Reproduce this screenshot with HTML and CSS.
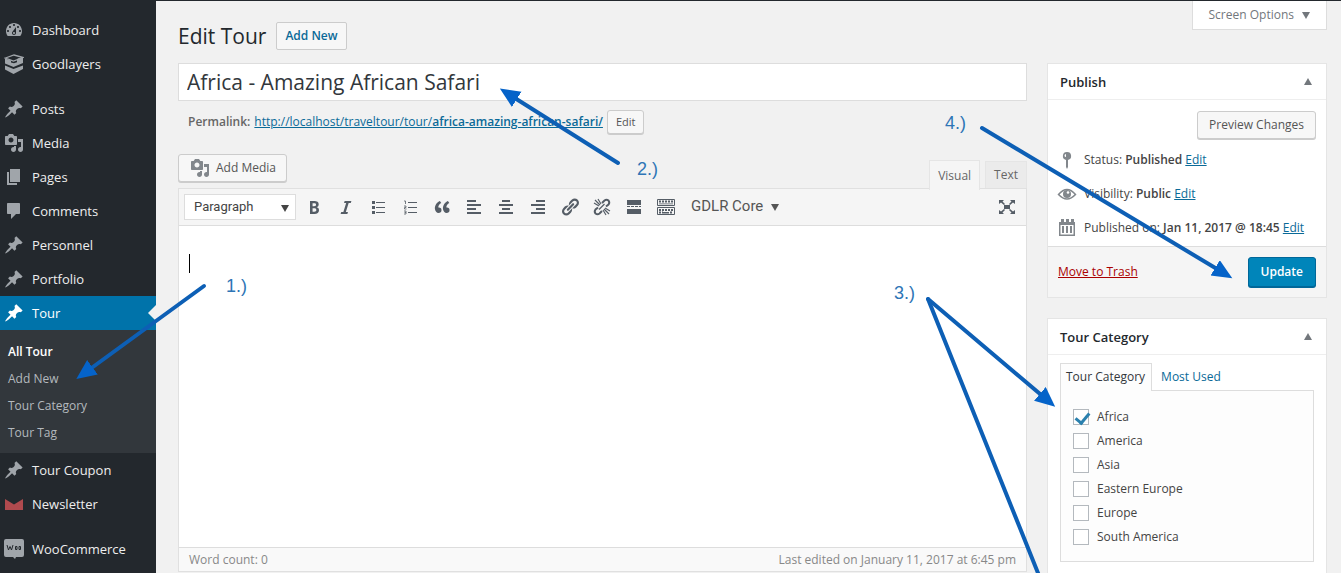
FILE: index.html
```html
<!DOCTYPE html>
<html lang="en">
<head>
<meta charset="utf-8">
<title>Edit Tour</title>
<link rel="stylesheet" href="styles.css">
</head>
<body>
<svg class="defs" aria-hidden="true">
  <symbol id="pin" viewBox="0 0 20 20"><path d="M10.44 3.02l1.82-1.82 6.36 6.35-1.83 1.82c-1.05-.68-2.48-.57-3.41.36l-.75.75c-.92.93-1.04 2.35-.35 3.41l-1.83 1.82-2.41-2.41-2.8 2.79c-.42.42-3.38 2.71-3.8 2.29s1.86-3.39 2.28-3.81l2.79-2.79L4.1 9.36l1.83-1.82c1.05.69 2.48.57 3.4-.36l.75-.75c.93-.92 1.05-2.35.36-3.41z"/></symbol>
  <symbol id="media" viewBox="0 0 20 20"><path fill-rule="evenodd" d="M13 11V4c0-.55-.45-1-1-1h-1.670L9 1H5L3.670 3H2c-.55 0-1 .45-1 1v7c0 .55.45 1 1 1h10c.55 0 1-.45 1-1zM7 4.500c1.380 0 2.500 1.120 2.500 2.500S8.380 9.500 7 9.500 4.500 8.380 4.500 7 5.620 4.500 7 4.500zM14 6h5v10.500c0 1.380-1.120 2.500-2.500 2.500S14 17.880 14 16.500s1.120-2.500 2.500-2.500c.17 0 .34.02.5.05V9h-3V6zm-4 8.050V13h2v3.500c0 1.380-1.120 2.500-2.500 2.500S7 17.880 7 16.500 8.120 14 9.500 14c.17 0 .34.02.5.05z"/></symbol>
</svg>
<div class="app">
  <nav class="menu" aria-label="Main menu">
    <a class="menu-item" href="#"><svg class="icon" viewBox="0 0 20 20"><path fill-rule="evenodd" d="M3.760 16h12.480c1.100-1.370 1.760-3.110 1.760-5 0-4.420-3.580-8-8-8s-8 3.580-8 8c0 1.890.66 3.630 1.760 5zM10 4c.55 0 1 .45 1 1s-.45 1-1 1-1-.45-1-1 .45-1 1-1zM6 6c.55 0 1 .45 1 1s-.45 1-1 1-1-.45-1-1 .45-1 1-1zm8 0c.55 0 1 .45 1 1s-.45 1-1 1-1-.45-1-1 .45-1 1-1zm-5.370 5.550L12 7v6c0 1.100-.9 2-2 2s-2-.9-2-2c0-.57.24-1.080.63-1.450zM4 10c.55 0 1 .45 1 1s-.45 1-1 1-1-.45-1-1 .45-1 1-1zm12 0c.55 0 1 .45 1 1s-.45 1-1 1-1-.45-1-1 .45-1 1-1zm-5 3c0-.55-.45-1-1-1s-1 .45-1 1 .45 1 1 1 1-.45 1-1z"/></svg>Dashboard</a>
    <a class="menu-item" href="#"><svg class="icon" viewBox="0 0 20 20"><path fill="none" stroke="currentColor" stroke-width="1.300" d="M1.500 4L10 1l9 2.500L9.500 7z"/><path d="M1 4.500l6 2v2l3 .8 3-1V5l2-1 4-.5V9l-9.500 4L1 9.500z"/><path d="M1 11.500l8.500 3.500L19 11.500V15l-9.500 5L1 15.500z"/></svg>Goodlayers</a>
    <div class="menu-gap"></div>
    <a class="menu-item" href="#"><svg class="icon"><use href="#pin"/></svg>Posts</a>
    <a class="menu-item" href="#"><svg class="icon"><use href="#media"/></svg>Media</a>
    <a class="menu-item" href="#"><svg class="icon" viewBox="0 0 20 20"><path d="M6 15V2h10v13H6zm-1 1h8v2H3V5h2v11z"/></svg>Pages</a>
    <a class="menu-item" href="#"><svg class="icon" viewBox="0 0 20 20"><path d="M4 2h11c.6 0 1 .4 1 1v9c0 .6-.4 1-1 1h-3l-5 5v-5H4c-.6 0-1-.4-1-1V3c0-.6.4-1 1-1z"/></svg>Comments</a>
    <a class="menu-item" href="#"><svg class="icon"><use href="#pin"/></svg>Personnel</a>
    <a class="menu-item" href="#"><svg class="icon"><use href="#pin"/></svg>Portfolio</a>
    <a class="menu-item current" href="#"><svg class="icon"><use href="#pin"/></svg>Tour</a>
    <div class="submenu">
      <a class="active" href="#">All Tour</a>
      <a href="#">Add New</a>
      <a href="#">Tour Category</a>
      <a href="#">Tour Tag</a>
    </div>
    <a class="menu-item" href="#"><svg class="icon"><use href="#pin"/></svg>Tour Coupon</a>
    <a class="menu-item" href="#"><svg class="icon" viewBox="0 0 20 20"><path fill="#b04a4e" d="M1 5l9 5.500L19 5v11H1z"/></svg>Newsletter</a>
    <div class="menu-gap"></div>
    <a class="menu-item" href="#"><svg class="icon" viewBox="0 0 20 20"><path d="M2 0h16q2 0 2 2v14q0 2-2 2h-6l-1 2-2-2H2q-2 0-2-2V2q0-2 2-2z"/><path d="M3 6l1.500 5L6 7.500 7.500 11 9 6M11.500 7.500v3h1.500v-3zM15 7.500v3h1.500v-3z" fill="none" stroke="#23282d"/></svg>WooCommerce</a>
  </nav>

  <main class="main">
    <header class="page-head">
      <div class="heading"><h1>Edit Tour</h1><a class="add-new" href="#">Add New</a></div>
      <button class="screen-options" type="button">Screen Options <svg class="tri" viewBox="0 0 8 7"><path d="M0 0h8L4 7z"/></svg></button>
    </header>
    <div class="columns">
      <section class="editor-col">
        <input class="title" type="text" aria-label="Tour title" value="Africa - Amazing African Safari">
        <div class="permalink"><strong>Permalink:</strong><a href="#">http://localhost/traveltour/tour/<b>africa-amazing-african-safari/</b></a><button class="btn small" type="button">Edit</button></div>
        <div class="editor-tools">
          <button class="btn add-media" type="button"><svg class="icon"><use href="#media"/></svg>Add Media</button>
          <div class="mode-tabs"><button class="on" type="button">Visual</button><button type="button">Text</button></div>
        </div>
        <div class="editor">
          <div class="toolbar">
            <div class="format"><select aria-label="Format"><option>Paragraph</option></select><svg class="tri" viewBox="0 0 8 7"><path d="M0 0h8L4 7z"/></svg></div>
            <button type="button" aria-label="Bold"><svg viewBox="0 0 20 20"><path fill-rule="evenodd" d="M6 4v13h4.540c1.370 0 2.460-.33 3.260-1 .8-.66 1.200-1.580 1.200-2.770 0-.84-.17-1.510-.51-2.010s-.9-.85-1.670-1.030v-.09c.57-.1 1.020-.4 1.360-.9s.51-1.130.51-1.910c0-1.140-.39-1.980-1.170-2.500C12.750 4.260 11.500 4 9.780 4H6zm2.570 5.150V6.260h1.360c.73 0 1.270.11 1.610.32.34.22.51.58.51 1.070 0 .54-.16.92-.47 1.150s-.82.35-1.510.35h-1.500zm0 2.190h1.600c1.440 0 2.160.53 2.160 1.610 0 .6-.17 1.050-.51 1.340s-.86.43-1.570.43H8.570v-3.380z"/></svg></button>
            <button type="button" aria-label="Italic"><svg viewBox="0 0 20 20"><path d="M14.780 6h-2.130l-2.800 9h2.120l-.62 2H4.600l.62-2h2.140l2.800-9H8.030l.62-2h6.750z"/></svg></button>
            <button type="button" aria-label="Bulleted list"><svg viewBox="0 0 20 20"><path d="M4 4h3v3H4zM4 9h3v3H4zM4 14h3v3H4zM8 5h9v1H8zM8 10h9v1H8zM8 15h9v1H8z"/></svg></button>
            <button type="button" aria-label="Numbered list"><svg viewBox="0 0 20 20"><path d="M8 5h9v1H8zM8 10h9v1H8zM8 15h9v1H8z"/><path d="M4 4h1.500v3M4 9h2v1.500H4.500V12H6.500M4 14h2v3H4M4.500 15.500H6" fill="none" stroke="#555d66" stroke-width=".8"/></svg></button>
            <button type="button" aria-label="Quote"><svg viewBox="0 0 20 20"><path d="M9.490 13.220c0-.74-.2-1.380-.61-1.900-.62-.78-1.830-.88-2.530-.72-.29-1.650 1.110-3.750 2.920-4.650L7.880 4c-2.730 1.300-5.420 4.280-4.960 8.050C3.210 14.430 4.590 16 6.540 16c.85 0 1.560-.25 2.120-.75s.83-1.180.83-2.030zm8.050 0c0-.74-.2-1.380-.61-1.900-.63-.78-1.830-.88-2.530-.72-.29-1.650 1.110-3.750 2.920-4.650L15.930 4c-2.730 1.300-5.410 4.280-4.950 8.050.29 2.380 1.660 3.950 3.610 3.950.85 0 1.560-.25 2.120-.75s.83-1.180.83-2.030z"/></svg></button>
            <button type="button" aria-label="Align left"><svg viewBox="0 0 20 20"><path d="M3 3h9v2H3zM3 7h14v2H3zM3 11h9v2H3zM3 15h14v2H3z"/></svg></button>
            <button type="button" aria-label="Align center"><svg viewBox="0 0 20 20"><path d="M6 3h8v2H6zM3 7h14v2H3zM6 11h8v2H6zM3 15h14v2H3z"/></svg></button>
            <button type="button" aria-label="Align right"><svg viewBox="0 0 20 20"><path d="M8 3h9v2H8zM3 7h14v2H3zM8 11h9v2H8zM3 15h14v2H3z"/></svg></button>
            <button type="button" aria-label="Link"><svg viewBox="0 0 20 20"><path d="M17.740 2.760c1.680 1.690 1.680 4.410 0 6.100l-1.530 1.520c-1.120 1.120-2.700 1.470-4.140 1.090l2.620-2.610.76-.77.76-.76c.84-.84.84-2.200 0-3.040-.84-.85-2.200-.85-3.040 0l-.77.76-3.380 3.380c-.37-1.440-.02-3.020 1.100-4.140l1.520-1.530c1.690-1.680 4.420-1.680 6.100 0zM8.590 13.430l5.340-5.340c.42-.42.42-1.100 0-1.520-.44-.43-1.130-.39-1.530 0l-5.330 5.340c-.42.42-.42 1.100 0 1.520.44.43 1.130.39 1.520 0zm-.76 2.290l4.140-4.150c.38 1.440.03 3.020-1.090 4.140l-1.520 1.530c-1.690 1.680-4.410 1.680-6.100 0-1.680-1.680-1.680-4.420 0-6.100l1.530-1.520c1.120-1.120 2.700-1.470 4.140-1.100l-4.140 4.150c-.85.84-.85 2.200 0 3.050.84.84 2.200.84 3.040 0z"/></svg></button>
            <button type="button" aria-label="Remove link"><svg viewBox="0 0 20 20"><path fill="none" stroke="#555d66" stroke-width="2" d="M10 6l2.500-2.500q2-1.500 4 0 1.500 2 0 4L14 9.500M10 14l-2.500 2.500q-2 1.500-4 0-1.500-2 0-4L6 10.500"/><path fill="none" stroke="#555d66" stroke-width="1.200" d="M8 8L3 3M9 7L6 2M7 9L2 6M12 12l5 5M11 13l3 5M13 11l5 3M7 12.500l5.500-5.500"/></svg></button>
            <button type="button" aria-label="Read more"><svg viewBox="0 0 20 20"><path d="M3 3h14v5H3zM3 9h3v1H3zM7 9h3v1H7zM11 9h3v1h-3zM15 9h2v1h-2zM3 12h14v5H3z"/></svg></button>
            <button type="button" aria-label="Toolbar toggle"><svg viewBox="0 0 20 20"><path fill="none" stroke="#555d66" d="M1.500 2.500h17v6h-17zM1.500 10.500h17v7h-17z"/><path fill="none" stroke="#555d66" stroke-width="2" stroke-dasharray="2 1" d="M3 4.500h14M3 13h14M3 15.500h4M14 15.500h3"/><path d="M7 15h6v1.500H7zM3 6.500h14v.7H3z"/></svg></button>
            <button class="core" type="button">GDLR Core <svg class="tri" viewBox="0 0 8 7"><path d="M0 0h8L4 7z"/></svg></button>
            <button class="full" type="button" aria-label="Fullscreen"><svg viewBox="0 0 20 20"><path d="M7 8h6v4H7zM2 3h5L5.500 4.500 8 7 7 8 4 5.500 2 7zM18 3h-5l1.500 1.500L12 7l1 1 3-2.500L18 7zM2 17h5l-1.500-1.500L8 13l-1-1-3 2.500L2 13zM18 17h-5l1.500-1.500L12 13l1-1 3 2.500 2-1.500z"/></svg></button>
          </div>
          <div class="canvas" role="textbox" aria-label="Content"><span class="caret"></span></div>
          <div class="status"><span>Word count: 0</span><span>Last edited on January 11, 2017 at 6:45 pm</span></div>
        </div>
      </section>

      <aside class="side-col">
        <section class="box">
          <h2>Publish<svg class="tri" viewBox="0 0 8 7"><path d="M0 7h8L4 0z"/></svg></h2>
          <div class="publish">
            <button class="btn preview" type="button">Preview Changes</button>
            <div class="info"><svg class="icon" viewBox="0 0 20 20"><path fill-rule="evenodd" d="M10 2a4 4 0 0 1 1 7.900V17l-1 2-1-2V9.900A4 4 0 0 1 10 2zM9 4a1.500 1.500 0 0 0 0 3z"/></svg><span>Status: <b>Published</b> <a href="#">Edit</a></span></div>
            <div class="info"><svg class="icon" viewBox="0 0 20 20"><path fill="none" stroke="#82878c" stroke-width="1.500" d="M1.500 10.500q8.500-10 17 0-8.500 9-17 0z"/><circle cx="10" cy="10" r="4"/><circle cx="11" cy="8.500" r="1.300" fill="#fff"/></svg><span>Visibility: <b>Public</b> <a href="#">Edit</a></span></div>
            <div class="info"><svg class="icon" viewBox="0 0 20 20"><path fill-rule="evenodd" d="M2 4h2V1h3v3h2V1h3v3h2V1h3v3h1v14H2zM3.500 7v9.500h13V7zM5 8h2v7H5zM9 8h2v7H9zM13 8h2v7h-2z"/></svg><span>Published on: <b>Jan 11, 2017 @ 18:45</b> <a href="#">Edit</a></span></div>
          </div>
          <div class="publish-foot"><a class="trash" href="#">Move to Trash</a><button class="update" type="button">Update</button></div>
        </section>
        <section class="box">
          <h2>Tour Category<svg class="tri" viewBox="0 0 8 7"><path d="M0 7h8L4 0z"/></svg></h2>
          <div class="category">
            <div class="cat-tabs"><a class="on" href="#">Tour Category</a><a href="#">Most Used</a></div>
            <div class="cat-list">
              <label><input type="checkbox" checked>Africa</label>
              <label><input type="checkbox">America</label>
              <label><input type="checkbox">Asia</label>
              <label><input type="checkbox">Eastern Europe</label>
              <label><input type="checkbox">Europe</label>
              <label><input type="checkbox">South America</label>
            </div>
          </div>
        </section>
      </aside>
    </div>
  </main>
  <svg class="notes" width="1341" height="573" viewBox="0 0 1341 573">
    <defs><marker id="head" markerUnits="userSpaceOnUse" markerWidth="22" markerHeight="20" refX="8" refY="9" orient="auto"><path d="M0 0L20 9L0 18z" fill="#0563c9"/></marker></defs>
    <g class="arrows">
      <path d="M204 286L86 372" marker-end="url(#head)"/>
      <path d="M618 163L510 95" marker-end="url(#head)"/>
      <path d="M928 299L1046 399" marker-end="url(#head)"/>
      <path d="M928 299L1042 583"/>
      <path d="M982 128L1222 272" marker-end="url(#head)"/>
    </g>
    <text x="226" y="292">1.)</text>
    <text x="637" y="175">2.)</text>
    <text x="894" y="299">3.)</text>
    <text x="945" y="129">4.)</text>
  </svg>
</div>
</body>
</html>
```

FILE: styles.css
```css
* { box-sizing: border-box; }
body {
  margin: 0;
  background: #f1f1f1;
  color: #444;
  font: 12px/18px "Open Sans", "Noto Sans", sans-serif;
}
button, input, select { font: inherit; color: inherit; margin: 0; }
button { padding: 0; border: 0; background: none; }
a { color: #0a6a98; }
b, strong { font-weight: 600; }
svg { flex: none; fill: currentColor; }
.defs { position: absolute; width: 0; height: 0; }
.icon { width: 20px; height: 20px; color: #82878c; }
.tri { width: 8px; height: 7px; }
.app { position: relative; display: flex; height: 100vh; overflow: hidden; }

.menu { flex: 0 0 156px; padding-top: 13px; background: #23282d; }
.menu-item {
  display: flex;
  align-items: center;
  gap: 8px;
  height: 34px;
  padding-left: 4px;
  color: #eee;
  font-size: 13px;
  text-decoration: none;
}
.menu-item .icon { color: #a0a5aa; }
.menu-gap { height: 11px; }
.menu-item.current { background: #0073aa; color: #fff; }
.menu-item.current .icon { color: #fff; }
.menu-item.current::after {
  content: "";
  margin-left: auto;
  border: 8px solid transparent;
  border-left: 0;
  border-right-color: #f1f1f1;
}
.submenu { padding: 8px 8px 7px; background: #32373c; }
.submenu a { display: block; line-height: 27px; color: #b4b9be; text-decoration: none; }
.submenu .active { color: #fff; font-weight: 600; }

.main { flex: 1; min-width: 0; padding: 0 14px 0 22px; border-top: 1px solid #23282d; }
.page-head { display: flex; justify-content: space-between; align-items: flex-start; height: 62px; }
.heading { display: flex; align-items: center; gap: 10px; padding-top: 20px; }
h1 { margin: 0; font-size: 21px; line-height: 30px; font-weight: 400; color: #23282d; }
.add-new {
  padding: 3px 8px;
  border: 1px solid #ccc;
  border-radius: 2px;
  background: #f7f7f7;
  font-weight: 600;
  line-height: 20px;
  text-decoration: none;
}
.screen-options {
  display: flex;
  align-items: center;
  gap: 8px;
  height: 29px;
  padding: 0 16px;
  border: 1px solid #ddd;
  border-top: 0;
  background: #fff;
  color: #72777c;
}
.columns { display: flex; gap: 20px; align-items: flex-start; }
.editor-col { flex: 1; min-width: 0; }
.title {
  display: block;
  width: 100%;
  height: 38px;
  padding: 0 8px;
  border: 1px solid #ddd;
  background: #fff;
  color: #32373c;
  font-size: 21px;
}
.permalink { display: flex; align-items: center; gap: 4px; height: 25px; margin: 8px 0 20px; padding-left: 10px; color: #666; }
.btn {
  border: 1px solid #ccc;
  border-radius: 3px;
  background: #f7f7f7;
  box-shadow: 0 1px 0 #ccc;
  color: #555;
}
.btn.small { height: 24px; padding: 0 8px; font-size: 11px; line-height: 20px; }
.editor-tools { display: flex; justify-content: space-between; align-items: flex-end; height: 34px; }
.add-media { display: flex; align-items: center; gap: 6px; height: 28px; padding: 0 10px 0 11px; align-self: flex-start; }
.mode-tabs { display: flex; align-items: flex-end; gap: 5px; height: 28px; }
.mode-tabs button { height: 27px; padding: 0 8px; border: 1px solid #e5e5e5; border-bottom: 0; background: #ebebeb; color: #666; }
.mode-tabs .on { position: relative; height: 30px; margin-bottom: -2px; background: #f5f5f5; }
.editor { border: 1px solid #e0e0e0; }
.toolbar {
  display: flex;
  align-items: center;
  height: 37px;
  padding: 0 3px 0 5px;
  border-bottom: 1px solid #ddd;
  background: #f5f5f5;
}
.toolbar button { display: flex; justify-content: center; align-items: center; width: 32px; height: 28px; color: #555d66; }
.toolbar button svg { width: 20px; height: 20px; }
.format { position: relative; width: 112px; margin-right: 2px; font-family: Roboto, sans-serif; font-size: 13px; color: #444; }
.format select { display: block; width: 100%; height: 26px; padding: 0 9px; border: 1px solid #ddd; border-radius: 0; background: #fff; appearance: none; }
.format .tri { position: absolute; right: 7px; top: 11px; }
.toolbar .core { width: auto; gap: 8px; padding: 0 9px 3px; font: 15px/20px Roboto, sans-serif; color: #555; }
.toolbar .core .tri { width: 8px; height: 7px; margin-top: 4px; }
.toolbar .full { margin-left: auto; }
.canvas { height: 321px; padding: 28px 10px; background: #fff; }
.caret { display: block; width: 1px; height: 19px; background: #000; }
.status { display: flex; justify-content: space-between; height: 24px; padding: 0 10px; border-top: 1px solid #ddd; background: #f9f9f9; color: #888; line-height: 24px; }

.side-col { flex: 0 0 280px; }
.box { margin-bottom: 20px; border: 1px solid #e5e5e5; background: #fff; }
.box h2 {
  display: flex;
  justify-content: space-between;
  align-items: center;
  height: 36px;
  margin: 0;
  padding: 0 14px 0 12px;
  border-bottom: 1px solid #eee;
  color: #23282d;
  font-size: 13px;
  font-weight: 600;
}
.box h2 .tri { color: #72777c; }
.publish { display: flex; flex-direction: column; padding: 11px 10px 1px; }
.preview { align-self: flex-end; height: 28px; margin-bottom: 4px; padding: 0 11px; }
.info { display: flex; align-items: center; gap: 7px; height: 34px; }
.info .icon { margin-left: -1px; }
.publish-foot {
  display: flex;
  justify-content: space-between;
  align-items: center;
  height: 51px;
  padding: 0 10px;
  border-top: 1px solid #ddd;
  background: #f5f5f5;
}
.trash { color: #a00; }
.update {
  height: 30px;
  padding: 0 12px;
  border: 1px solid #006799;
  border-radius: 3px;
  background: #0085ba;
  box-shadow: 0 1px 0 #006799;
  color: #fff;
  font-weight: 600;
}
.category { padding: 8px 12px 42px; }
.cat-tabs { display: flex; }
.cat-tabs a { height: 27px; padding: 0 8px; border: 1px solid transparent; border-bottom: 0; line-height: 26px; text-decoration: none; }
.cat-tabs .on { position: relative; height: 28px; margin-bottom: -1px; padding: 0 6px 0 5px; border-color: #ddd; background: #fdfdfd; color: #32373c; }
.cat-list { padding: 14px 12px 12px; border: 1px solid #ddd; background: #fdfdfd; }
.cat-list label { display: flex; align-items: center; gap: 8px; height: 24px; }
.cat-list input { appearance: none; width: 16px; height: 16px; border: 1px solid #b4b9be; background: #fff; }
.cat-list input:checked::before {
  content: "";
  display: block;
  width: 6px;
  height: 11px;
  margin: 0 0 0 4px;
  border: solid #2a80ae;
  border-width: 0 3px 3px 0;
  transform: rotate(40deg);
}
.notes { position: absolute; left: 0; top: 0; pointer-events: none; }
.arrows { fill: none; stroke: #0d5fb5; stroke-width: 4px; stroke-linecap: round; }
.notes text { fill: #2e75b6; font: 18px "Liberation Sans", Arial, sans-serif; }
```
